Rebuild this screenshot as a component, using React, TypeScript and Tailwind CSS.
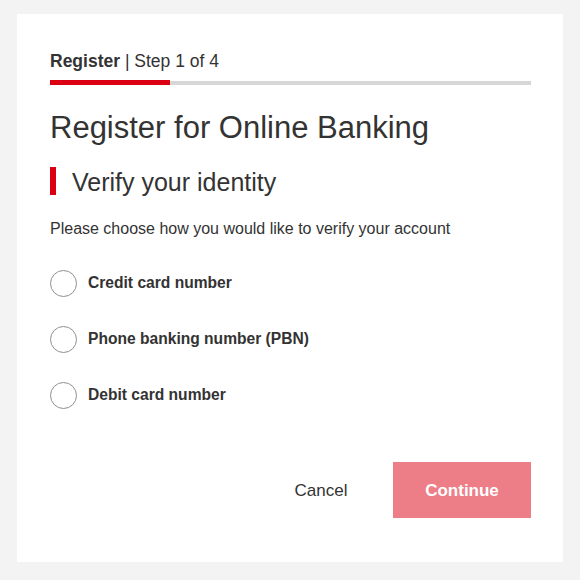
import { useState } from 'react';

const OPTIONS = ['Credit card number', 'Phone banking number (PBN)', 'Debit card number'];

export default function App() {
  const [selected, setSelected] = useState<number | null>(null);

  return (
    <div className="h-[580px] bg-[#f3f3f3] pt-[14px] pl-[17px] font-['Liberation_Sans',Arial,sans-serif] text-[#333333]">
      <div className="flex h-[548px] w-[546px] flex-col bg-white pl-[33px] pr-[32px] pt-[35px]">
        <div className="text-[17.5px] leading-[24px]">
          <span className="font-bold">Register</span> | Step 1 of 4
        </div>
        <div className="mt-[7px] flex h-[5px] items-center">
          <div className="h-[5px] w-[120px] bg-[#db0011]" />
          <div className="h-[4px] flex-1 bg-[#d7d7d7]" />
        </div>

        <h1 className="mt-[25px] text-[31px] leading-[36px] font-normal">Register for Online Banking</h1>

        <div className="mt-[21px] flex h-[28px] items-center">
          <div className="h-[28px] w-[6px] bg-[#db0011]" />
          <h2 className="ml-4 pt-[2px] text-[25px] leading-[28px] font-normal">Verify your identity</h2>
        </div>

        <p className="mt-6 text-[16px] leading-[20px]">Please choose how you would like to verify your account</p>

        <div className="mt-[30px] flex flex-col gap-[28px]">
          {OPTIONS.map((label, i) => (
            <label key={label} className="flex h-[28px] cursor-pointer items-center" onClick={() => setSelected(i)}>
              <span className="flex h-[27px] w-[27px] items-center justify-center rounded-full border-[1.5px] border-[#8f8f8f]">
                {selected === i && <span className="h-[13px] w-[13px] rounded-full bg-[#333333]" />}
              </span>
              <span className="ml-[11px] text-[15.6px] font-bold leading-[20px]">{label}</span>
            </label>
          ))}
        </div>

        <div className="mt-[53px] flex justify-end gap-[17px]">
          <button type="button" className="h-[56px] w-[110px] pt-[2px] text-[17px]">
            Cancel
          </button>
          <button
            type="button"
            disabled={selected === null}
            className="h-[56px] w-[138px] bg-[#ed7d87] pt-[2px] text-[17px] font-bold text-white"
          >
            Continue
          </button>
        </div>
      </div>
    </div>
  );
}
